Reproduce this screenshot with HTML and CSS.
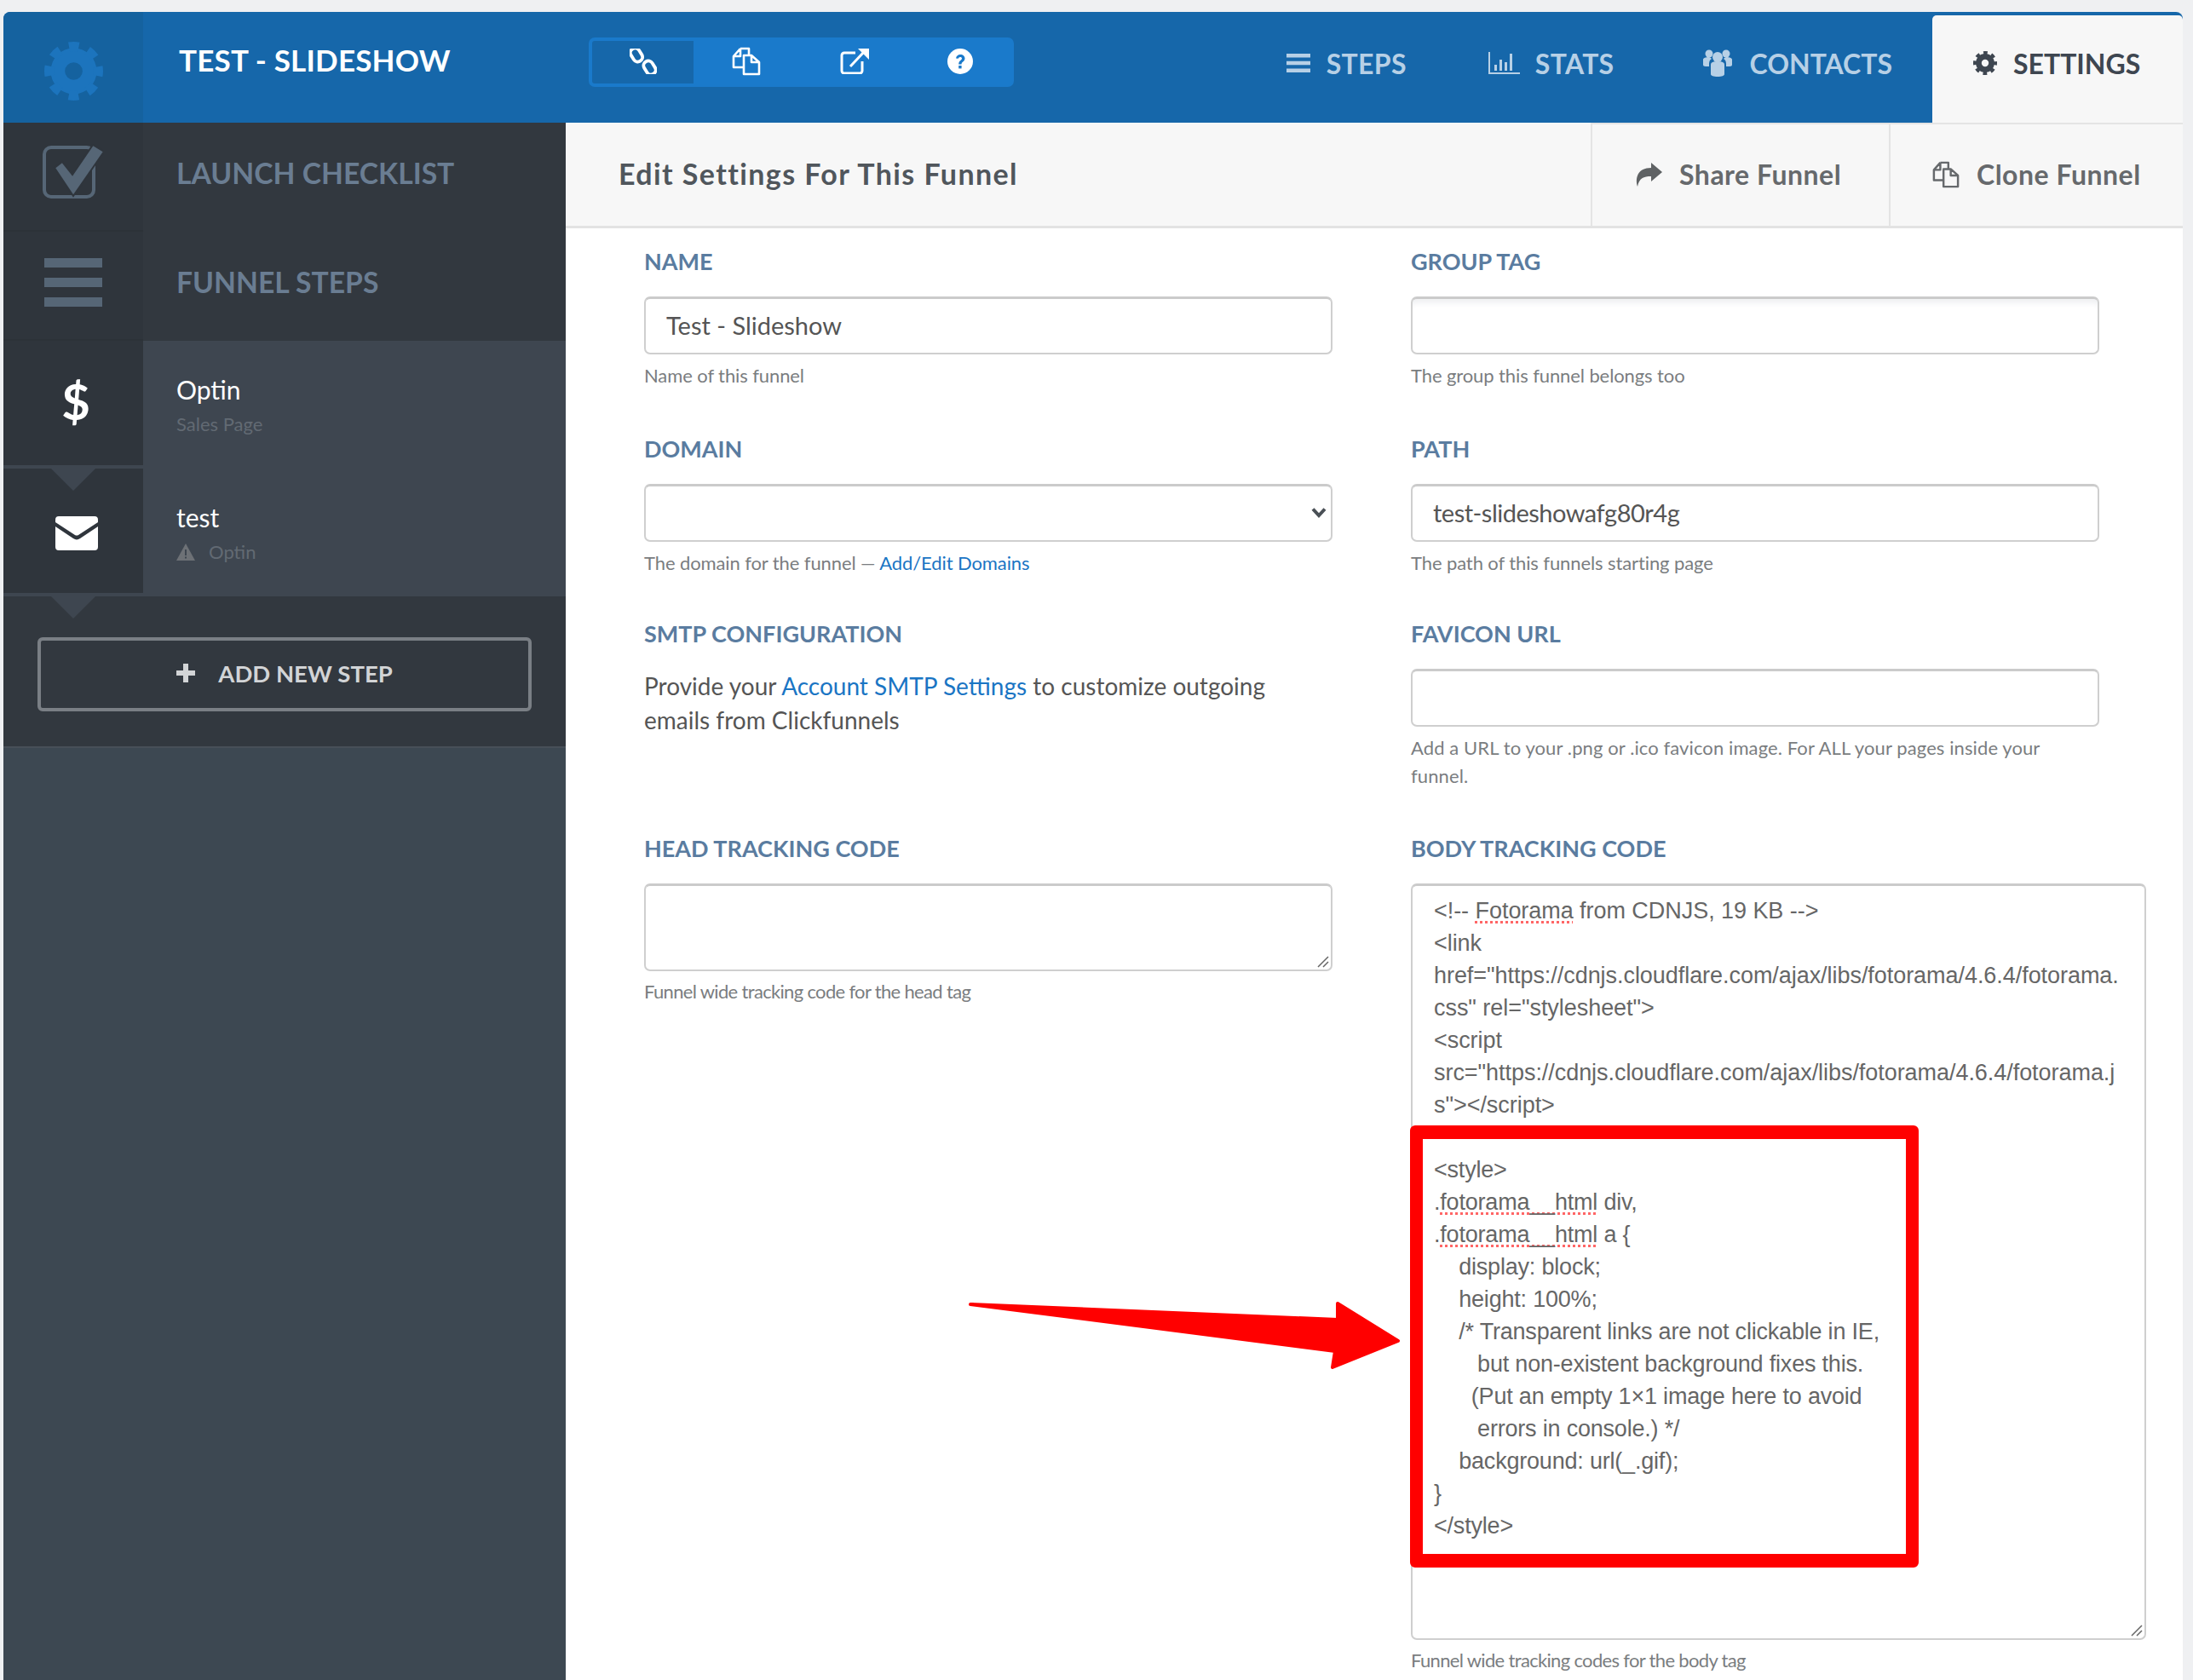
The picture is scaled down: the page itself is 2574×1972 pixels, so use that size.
FILE: index.html
```html
<!DOCTYPE html>
<html lang="en">
<head>
<meta charset="utf-8">
<title>Test - Slideshow</title>
<link rel="stylesheet" href="styles.css">
</head>
<body>
<svg class="defs" width="0" height="0" aria-hidden="true">
  <symbol id="gear" viewBox="0 0 100 100">
    <circle cx="50" cy="50" r="27" fill="none" stroke="currentColor" stroke-width="24"/>
    <circle cx="50" cy="50" r="42" fill="none" stroke="currentColor" stroke-width="16" stroke-dasharray="16.5 16.49" stroke-dashoffset="8.25"/>
  </symbol>
  <symbol id="copy" viewBox="0 0 34 34">
    <path d="M10 2h10v8M10 2L2 11v13h12M10 2v9H2M14 10h9v8h9v14H14zM23 10l9 8" fill="none" stroke="currentColor" stroke-width="2.600" stroke-linejoin="round"/>
  </symbol>
</svg>
<div class="app">
  <header class="topbar">
    <div class="brand"><svg class="brand-gear"><use href="#gear"/></svg></div>
    <div class="title">TEST - SLIDESHOW</div>
    <div class="toolbar">
      <span class="tool active"><svg class="ic-link" viewBox="0 0 32 30"><g fill="none" stroke="currentColor" stroke-width="3.800"><rect x="2.500" y="-1" width="11" height="17" rx="5.500" transform="rotate(-32 8 7.500)"/><rect x="18" y="14" width="11" height="17" rx="5.500" transform="rotate(-32 23.500 22.500)"/></g></svg></span>
      <span class="tool"><svg class="ic-34"><use href="#copy"/></svg></span>
      <span class="tool tool-shifted"><svg class="ic-ext" viewBox="0 0 34 30"><path d="M18 5H5a3 3 0 0 0-3 3v18a3 3 0 0 0 3 3h18a3 3 0 0 0 3-3V15" fill="none" stroke="currentColor" stroke-width="3"/><path d="M12 21L28 4" fill="none" stroke="currentColor" stroke-width="3"/><path d="M21 0h13v13z" fill="currentColor"/></svg></span>
      <span class="tool"><svg class="ic-help" viewBox="0 0 30 30"><circle cx="15" cy="15" r="15" fill="currentColor"/><path d="M10 11.500C10.500 8.500 12.500 7 15.200 7c3 0 5.300 1.800 5.300 4.500 0 4-4 3.800-4 7h-3.300c0-4.500 3.800-4.500 3.800-6.900 0-1-.8-1.700-2-1.700-1.100 0-1.900.7-2.200 1.900z" fill="#1a7acb"/><rect x="13.200" y="20" width="3.400" height="3.400" fill="#1a7acb"/></svg></span>
    </div>
    <nav class="tabs">
      <a class="tab"><svg class="tab-ic" viewBox="0 0 28 22"><path d="M0 0h28v4.500H0zM0 8.700h28v4.500H0zM0 17.500h28V22H0z" fill="currentColor"/></svg>STEPS</a>
      <a class="tab tab-wide"><svg class="tab-ic tab-ic-stats" viewBox="0 0 37 26"><path d="M0 0h2v24h35v2H0zM7 15h3v7H7zM13 9h3v13h-3zM19 12h3v10h-3zM25 2h3v20h-3z" fill="currentColor"/></svg>STATS</a>
      <a class="tab tab-contacts"><svg class="tab-ic tab-ic-people" viewBox="0 0 34 32"><g fill="currentColor"><circle cx="7" cy="5" r="4.500"/><circle cx="27" cy="5" r="4.500"/><circle cx="17" cy="9" r="6"/><path d="M9 18c0-3 3-4 8-4s8 1 8 4v11c0 2-3 3-8 3s-8-1-8-3z"/><path d="M0 12c0-2 3-3 7-3 1 0 2 1 3 2-2 1-3 3-3 6v3H3c-2 0-3-1-3-2zM34 12c0-2-3-3-7-3-1 0-2 1-3 2 2 1 3 3 3 6v3h4c2 0 3-1 3-2z"/></g></svg>CONTACTS</a>
      <a class="tab tab-current"><svg class="tab-ic tab-ic-gear"><use href="#gear"/></svg>SETTINGS</a>
    </nav>
  </header>

  <div class="body">
    <aside class="sidebar">
      <div class="side-row">
        <div class="rail rail-check"><svg class="ic-check" viewBox="0 0 72 64"><rect x="2" y="4" width="58" height="58" rx="8" fill="none" stroke="currentColor" stroke-width="4"/><path d="M14 28l9-7 12 15L59 1l13 8-36 52z" fill="currentColor" stroke="#2f353c" stroke-width="2"/></svg></div>
        <div class="side-label">LAUNCH CHECKLIST</div>
      </div>
      <div class="side-row">
        <div class="rail"><svg class="ic-bars" viewBox="0 0 68 57"><path d="M0 0h68v11H0zM0 23h68v11H0zM0 46h68v11H0z" fill="currentColor"/></svg></div>
        <div class="side-label">FUNNEL STEPS</div>
      </div>
      <div class="step">
        <div class="step-rail"><span class="dollar">$</span></div>
        <div class="step-info">
          <div class="step-name">Optin</div>
          <div class="step-sub">Sales Page</div>
        </div>
      </div>
      <div class="step step-pointed">
        <div class="step-rail"><svg class="ic-mail" viewBox="0 0 50 40"><path d="M4 0h42a4 4 0 0 1 4 4v3L27 22a4 4 0 0 1-4 0L0 7V4a4 4 0 0 1 4-4zM0 12l21 14a7 7 0 0 0 8 0l21-14v24a4 4 0 0 1-4 4H4a4 4 0 0 1-4-4z" fill="#fff"/></svg></div>
        <div class="step-info">
          <div class="step-name">test</div>
          <div class="step-sub step-warn"><svg class="ic-warn" viewBox="0 0 22 20"><path d="M11 0l11 20H0z" fill="currentColor"/><path d="M10 7h2v7h-2zM10 15.500h2v2h-2z" fill="#3e4650"/></svg>Optin</div>
        </div>
      </div>
      <div class="add-area">
        <button class="add-btn" type="button"><svg class="ic-plus" viewBox="0 0 22 22"><path d="M8 0h6v8h8v6h-8v8H8v-8H0V8h8z" fill="currentColor"/></svg>ADD NEW STEP</button>
      </div>
    </aside>

    <main class="main">
      <div class="subhead">
        <h1 class="subhead-title">Edit Settings For This Funnel</h1>
        <a class="action action-share"><svg class="ic-share" viewBox="0 0 32 28"><path d="M19 0l13 11-13 11v-6C10 16 5 18 3 28 0 18 3 6 19 6z" fill="currentColor"/></svg>Share Funnel</a>
        <a class="action action-clone"><svg class="ic-clone"><use href="#copy"/></svg>Clone Funnel</a>
      </div>

      <form class="form">
        <div class="field">
          <label class="label">NAME</label>
          <input class="control" type="text" value="Test - Slideshow">
          <div class="help">Name of this funnel</div>
        </div>
        <div class="field">
          <label class="label">GROUP TAG</label>
          <input class="control control-shaded" type="text">
          <div class="help">The group this funnel belongs too</div>
        </div>
        <div class="field">
          <label class="label">DOMAIN</label>
          <div class="select-wrap">
            <select class="control control-select"><option></option></select>
            <svg class="chevron" viewBox="0 0 18 13"><path d="M2 2.500l7 7.500 7-7.500" fill="none" stroke="currentColor" stroke-width="4"/></svg>
          </div>
          <div class="help">The domain for the funnel — <a class="link">Add/Edit Domains</a></div>
        </div>
        <div class="field">
          <label class="label">PATH</label>
          <input class="control control-path" type="text" value="test-slideshowafg80r4g">
          <div class="help">The path of this funnels starting page</div>
        </div>
        <div class="field">
          <label class="label">SMTP CONFIGURATION</label>
          <p class="para">Provide your <a class="link">Account SMTP Settings</a> to customize outgoing emails from Clickfunnels</p>
        </div>
        <div class="field">
          <label class="label">FAVICON URL</label>
          <input class="control" type="text">
          <div class="help help-fav">Add a URL to your .png or .ico favicon image. For ALL your pages inside your funnel.</div>
        </div>
        <div class="field">
          <label class="label">HEAD TRACKING CODE</label>
          <div class="area area-head"><svg class="grip" viewBox="0 0 14 14"><path d="M1 13L13 1M7 13l6-6" stroke="#666" stroke-width="1.500" fill="none"/></svg></div>
          <div class="help help-tight">Funnel wide tracking code for the head tag</div>
        </div>
        <div class="field field-body">
          <label class="label">BODY TRACKING CODE</label>
          <div class="area area-body">
            <div class="code">
              <div class="code-line">&lt;!-- <span class="typo">Fotorama</span> from CDNJS, 19 KB --&gt;</div>
              <div class="code-line">&lt;link</div>
              <div class="code-line">href="https://cdnjs.cloudflare.com/ajax/libs/fotorama/4.6.4/fotorama.</div>
              <div class="code-line">css" rel="stylesheet"&gt;</div>
              <div class="code-line">&lt;script</div>
              <div class="code-line">src="https://cdnjs.cloudflare.com/ajax/libs/fotorama/4.6.4/fotorama.j</div>
              <div class="code-line">s"&gt;&lt;/script&gt;</div>
              <div class="code-line">&nbsp;</div>
              <div class="code-line code-tight">&lt;style&gt;</div>
              <div class="code-line code-tight">.<span class="typo">fotorama__html</span> div,</div>
              <div class="code-line code-tight">.<span class="typo">fotorama__html</span> a {</div>
              <div class="code-line code-tight">    display: block;</div>
              <div class="code-line code-tight">    height: 100%;</div>
              <div class="code-line code-tight">    /* Transparent links are not clickable in IE,</div>
              <div class="code-line code-tight">       but non-existent background fixes this.</div>
              <div class="code-line code-tight">      (Put an empty 1×1 image here to avoid</div>
              <div class="code-line code-tight">       errors in console.) */</div>
              <div class="code-line code-tight">    background: url(_.gif);</div>
              <div class="code-line code-tight">}</div>
              <div class="code-line code-tight">&lt;/style&gt;</div>
            </div>
            <svg class="grip" viewBox="0 0 14 14"><path d="M1 13L13 1M7 13l6-6" stroke="#666" stroke-width="1.500" fill="none"/></svg>
          </div>
          <div class="help help-tight">Funnel wide tracking codes for the body tag</div>
        </div>
      </form>
    </main>
  </div>
</div>

<div class="mark-box"></div>
<svg class="mark-arrow" viewBox="0 0 510 90"><path d="M3 5L434 23V4L505 48L428 79L431 60z" fill="#f00" stroke="#f00" stroke-width="4" stroke-linejoin="round"/></svg>
</body>
</html>
```

FILE: styles.css
```css
* { box-sizing: border-box; }
html, body { margin: 0; height: 100%; }
body {
  height: 1972px;
  overflow: hidden;
  background: #eff0f2;
  font-family: "Lato", "Open Sans", sans-serif;
  color: #555;
  position: relative;
}
.defs { position: absolute; }
.app { margin: 14px 12px 0 4px; height: 1958px; display: flex; flex-direction: column; }

/* top bar */
.topbar {
  height: 130px;
  flex: none;
  display: flex;
  background: #1667aa;
  border-radius: 8px 8px 0 0;
  overflow: hidden;
}
.brand { width: 164px; background: #15629f; display: flex; align-items: center; justify-content: center; color: #1c74bd; }
.brand-gear { width: 69px; height: 69px; margin-top: 9px; }
.title { width: 481px; margin-left: 42px; padding-top: 28px; color: #fff; font-weight: 700; font-size: 35px; line-height: 56px; letter-spacing: 0.2px; white-space: nowrap; }
.toolbar { margin-top: 30px; height: 58px; width: 499px; padding: 4px; display: flex; background: #1a7acb; border-radius: 7px; color: #fff; }
.tool { width: 124px; flex: none; padding-bottom: 3px; display: flex; align-items: center; justify-content: center; }
.tool.active { width: 119px; background: #1667aa; border-radius: 3px 0 0 3px; }
.tool-shifted { margin-left: 3px; }
.ic-link { width: 32px; height: 30px; }
.ic-34 { width: 34px; height: 34px; }
.ic-ext { width: 34px; height: 30px; }
.ic-help { width: 30px; height: 30px; }
.tabs { margin-left: auto; display: flex; }
.tab { display: flex; align-items: center; padding: 0 48px 10px 48px; font-size: 32px; font-weight: 700; letter-spacing: 0.3px; color: #b7d0e6; white-space: nowrap; }
.tab-wide { padding-right: 57px; }
.tab-contacts { padding-right: 47px; letter-spacing: 0; }
.tab-ic { width: 28px; height: 22px; margin-right: 19px; }
.tab-ic-stats { width: 37px; height: 26px; margin-right: 18px; }
.tab-ic-people { width: 34px; height: 32px; margin-right: 20px; }
.tab-ic-gear { width: 28px; height: 28px; }
.tab-current { margin-top: 4px; width: 294px; padding: 0 0 14px 48px; background: #f7f7f7; color: #3e4650; letter-spacing: 0; border-radius: 5px 5px 0 0; }

/* layout */
.body { flex: 1; display: flex; min-height: 0; }
.sidebar { width: 660px; flex: none; background: #3d4852; }
.side-row { height: 128px; display: flex; background: #32383f; }
.rail { width: 164px; padding-bottom: 8px; background: #2f353c; color: #566676; display: flex; align-items: center; justify-content: center; border-bottom: 2px solid #2c3238; }
.rail-check { padding-bottom: 12px; }
.side-label { padding-left: 39px; align-self: center; font-size: 33.7px; font-weight: 700; color: #6a7d92; white-space: nowrap; margin-top: -10px; }
.ic-check { width: 72px; height: 64px; }
.ic-bars { width: 68px; height: 57px; }

.step { height: 150px; display: flex; background: #3e4650; position: relative; }
.step-rail { width: 164px; height: 146px; background: #2f353c; display: flex; align-items: center; justify-content: center; position: relative; }
.step-pointed .step-rail::before,
.step-pointed::after {
  content: "";
  position: absolute;
  left: 56px;
  border-left: 26px solid transparent;
  border-right: 26px solid transparent;
  border-top: 26px solid #3e4650;
}
.step-pointed .step-rail::before { top: 0; }
.step-pointed::after { top: 150px; }
.dollar { font-family: "Lato", sans-serif; font-weight: 700; font-size: 58px; line-height: 1; color: #fff; margin-left: 6px; margin-top: -4px; }
.ic-mail { width: 50px; height: 40px; margin-left: 7px; margin-top: 6px; }
.step-info { padding: 37px 0 0 39px; }
.step-name { font-size: 30px; line-height: 40px; color: #fff; }
.step-sub { margin-top: 5px; font-size: 22px; line-height: 32px; color: #626a73; display: flex; align-items: center; }
.ic-warn { width: 22px; height: 20px; margin-right: 16px; color: #6d7176; }

.add-area { height: 178px; padding: 48px 40px 0; background: #32383f; border-bottom: 2px solid #484f58; }
.add-btn { width: 580px; height: 87px; padding: 0 0 3px; display: flex; align-items: center; justify-content: center; gap: 27px; background: transparent; border: 4px solid #7a7f85; border-radius: 6px; color: #d2d4d6; font-family: inherit; font-size: 27.5px; font-weight: 700; }
.ic-plus { width: 22px; height: 22px; }

/* main */
.main { flex: 1; background: #fff; min-width: 0; }
.subhead { height: 124px; display: flex; align-items: stretch; background: #f7f7f7; border-bottom: 3px solid #e3e3e3; }
.subhead-title { margin: -3px auto 0 62px; align-self: center; font-size: 34px; font-weight: 700; letter-spacing: 1.4px; color: #50565c; }
.action { display: flex; align-items: center; padding-bottom: 2px; border-left: 2px solid #e4e4e4; border-top: 2px solid #e4e4e4; font-size: 32px; font-weight: 700; letter-spacing: 0.5px; color: #66696c; white-space: nowrap; }
.action-share { width: 350px; padding-left: 50px; }
.action-clone { width: 345px; padding-left: 49px; }
.ic-share { width: 32px; height: 28px; margin-right: 20px; color: #5f6264; }
.ic-clone { width: 32px; height: 32px; margin-right: 20px; color: #66696c; }

.form { padding: 19px 0 0 92px; display: grid; grid-template-columns: 808px 863px; column-gap: 92px; grid-template-rows: 220px 217px 252px auto; }
.label { display: block; height: 40px; line-height: 40px; margin-bottom: 21px; font-size: 27px; font-weight: 700; color: #5a7ca0; white-space: nowrap; }
.control { display: block; width: 808px; height: 68px; padding: 0 24px 2px; background: #fff; border: 2px solid #cfcfcf; border-top: 3px solid #cbcbcb; border-radius: 7px; font-family: inherit; font-size: 29px; color: #555; outline: none; }
.control-path { letter-spacing: -0.5px; }
.control-shaded { box-shadow: inset 0 9px 6px -4px #f0f1f3; }
.select-wrap { position: relative; width: 808px; }
.control-select { appearance: none; }
.chevron { position: absolute; right: 7px; top: 27px; width: 18px; height: 13px; color: #4a5056; }
.help { margin-top: 9px; font-size: 22px; line-height: 32px; letter-spacing: -0.1px; color: #7a7d80; }
.help-fav { width: 770px; line-height: 33px; letter-spacing: 0.1px; margin-top: 8px; }
.help-tight { letter-spacing: -0.67px; margin-top: 8px; }
.para { margin: 0; width: 790px; font-size: 28px; line-height: 40px; color: #555; }
.link { color: #1a75c4; }

.area { position: relative; border: 2px solid #cfcfcf; border-top: 3px solid #cbcbcb; border-radius: 7px; background: #fff; }
.area-head { width: 808px; height: 103px; }
.area-body { width: 863px; height: 888px; padding: 10px 0 0 25px; }
.grip { position: absolute; right: 2px; bottom: 2px; width: 14px; height: 14px; }
.code { font-family: "Liberation Sans", Arial, sans-serif; font-size: 27px; line-height: 38px; letter-spacing: -0.05px; color: #666; }
.code-line { white-space: pre; }
.code-tight { letter-spacing: -0.2px; }
.typo { text-decoration: underline dotted #f66 3px; text-underline-offset: 3px; }

/* annotation overlay */
.mark-box { position: absolute; left: 1655px; top: 1321px; width: 597px; height: 519px; border: solid #f00; border-width: 16px 15px; border-radius: 6px; }
.mark-arrow { position: absolute; left: 1136px; top: 1526px; width: 510px; height: 90px; }
```
